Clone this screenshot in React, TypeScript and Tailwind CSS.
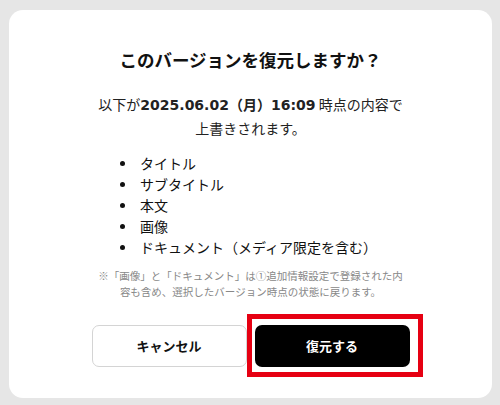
import React from "react";

const jp = { fontFamily: '"Noto Sans CJK JP", "Noto Sans", sans-serif' };

export default function App() {
  const items = ["タイトル", "サブタイトル", "本文", "画像", "ドキュメント（メディア限定を含む）"];
  return (
    <div className="w-[500px] h-[405px] bg-[#e6e6e6] pt-[10px] pl-[9px]" style={jp}>
      <div className="w-[483px] h-[388px] bg-white rounded-[14px] flex flex-col items-center pt-[36px]">
        <h1 className="text-[17.5px] leading-[27px] font-bold text-[#111]">このバージョンを復元しますか？</h1>
        <p className="mt-[20px] text-[14px] leading-[23px] text-[#222] text-center">
          以下が
          <span className="font-bold" style={{ fontFamily: '"DejaVu Sans", "Noto Sans CJK JP", sans-serif' }}>2025.06.02</span>
          <span className="font-bold">（月）</span>
          <span className="font-bold" style={{ fontFamily: '"DejaVu Sans", "Noto Sans CJK JP", sans-serif' }}>16:09</span> 時点の内容で
          <br />
          上書きされます。
        </p>
        <ul className="self-start ml-[111px] mt-[13px] flex flex-col">
          {items.map((t) => (
            <li key={t} className="flex items-center h-[21px] text-[14px] text-[#111]">
              <span className="w-[5px] h-[5px] rounded-full bg-[#111] mr-[15px]" />
              {t}
            </li>
          ))}
        </ul>
        <p className="mt-[10px] text-[10.5px] leading-[16px] text-[#888] text-center">
          ※「画像」と「ドキュメント」は①追加情報設定で登録された内
          <br />
          容も含め、選択したバージョン時点の状態に戻ります。
        </p>
        <div className="mt-[25px] flex gap-[8px]">
          <button className="w-[155px] h-[42px] rounded-[7px] border border-[#d4d4d4] bg-white text-[13px] font-bold text-[#111]">
            キャンセル
          </button>
          <div className="relative">
            <button className="w-[155px] h-[42px] rounded-[7px] bg-black text-[13px] font-bold text-white">
              復元する
            </button>
            <div className="absolute -left-[8px] -right-[13px] -top-[11px] -bottom-[10px] border-[5px] border-[#e60012] pointer-events-none" />
          </div>
        </div>
      </div>
    </div>
  );
}
